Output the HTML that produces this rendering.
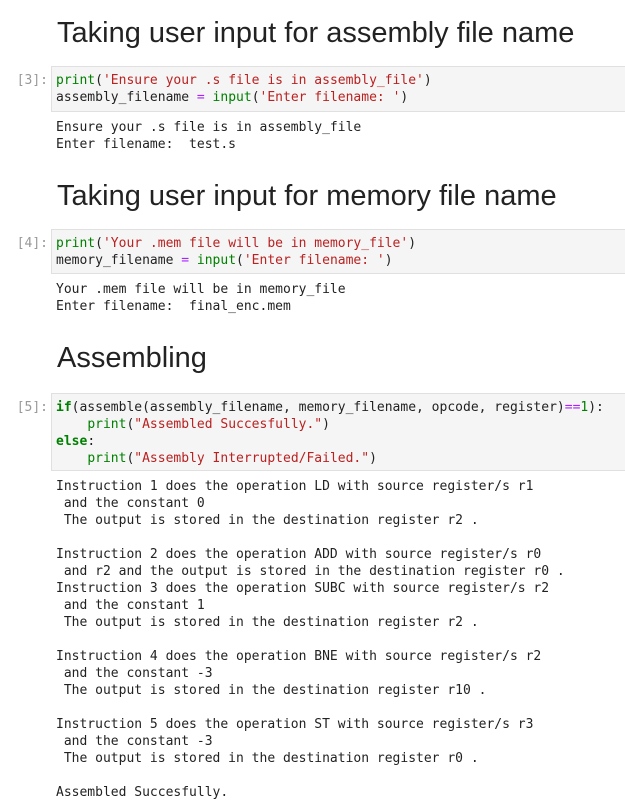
<!DOCTYPE html>
<html><head><meta charset="utf-8"><style>
body{margin:0;width:625px;height:804px;background:#fff;position:relative;overflow:hidden;font-family:"DejaVu Sans Mono",monospace;}
h1{position:absolute;left:57px;margin:0;font:400 29px/1 "Liberation Sans",Arial,sans-serif;color:#222;white-space:nowrap;}
.box{position:absolute;left:51px;width:600px;background:#f5f5f5;border:1px solid #e0e0e0;box-sizing:border-box;}
pre{position:absolute;left:56px;margin:0;font:13px/17px "DejaVu Sans Mono",monospace;color:#222;white-space:pre;}
.p{position:absolute;right:577px;font:13px/17px "DejaVu Sans Mono",monospace;color:#999;}
.g{color:#008000}.s{color:#ba2121}.o{color:#aa22ff}.k{color:#008000;font-weight:bold}
</style></head><body>
<h1 style="top:19px">Taking user input for assembly file name</h1>
<div class="box" style="top:66px;height:46px"></div>
<div class="p" style="top:72px">[3]:</div>
<pre style="top:72px"><span class="g">print</span>(<span class="s">'Ensure your .s file is in assembly_file'</span>)
assembly_filename <span class="o">=</span> <span class="g">input</span>(<span class="s">'Enter filename: '</span>)</pre>
<pre style="top:119px">Ensure your .s file is in assembly_file
Enter filename:  test.s</pre>

<h1 style="top:182px">Taking user input for memory file name</h1>
<div class="box" style="top:229px;height:45px"></div>
<div class="p" style="top:235px">[4]:</div>
<pre style="top:235px"><span class="g">print</span>(<span class="s">'Your .mem file will be in memory_file'</span>)
memory_filename <span class="o">=</span> <span class="g">input</span>(<span class="s">'Enter filename: '</span>)</pre>
<pre style="top:281px">Your .mem file will be in memory_file
Enter filename:  final_enc.mem</pre>

<h1 style="top:344px">Assembling</h1>
<div class="box" style="top:393px;height:78px"></div>
<div class="p" style="top:399px">[5]:</div>
<pre style="top:399px"><span class="k">if</span>(assemble(assembly_filename, memory_filename, opcode, register)<span class="o">==</span><span class="g">1</span>):
    <span class="g">print</span>(<span class="s">"Assembled Succesfully."</span>)
<span class="k">else</span>:
    <span class="g">print</span>(<span class="s">"Assembly Interrupted/Failed."</span>)</pre>
<pre style="top:478px">Instruction 1 does the operation LD with source register/s r1
 and the constant 0
 The output is stored in the destination register r2 .

Instruction 2 does the operation ADD with source register/s r0
 and r2 and the output is stored in the destination register r0 .
Instruction 3 does the operation SUBC with source register/s r2
 and the constant 1
 The output is stored in the destination register r2 .

Instruction 4 does the operation BNE with source register/s r2
 and the constant -3
 The output is stored in the destination register r10 .

Instruction 5 does the operation ST with source register/s r3
 and the constant -3
 The output is stored in the destination register r0 .

Assembled Succesfully.</pre>
</body></html>
